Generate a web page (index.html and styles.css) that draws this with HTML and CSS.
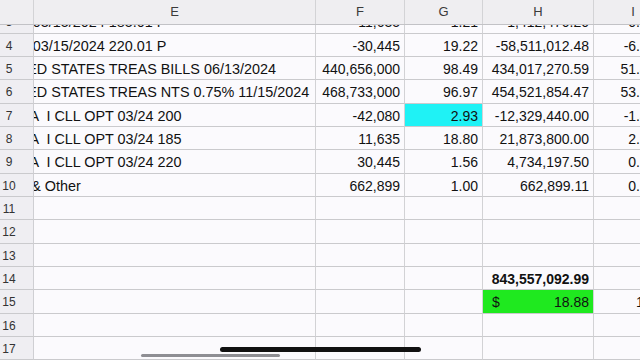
FILE: index.html
```html
<!DOCTYPE html>
<html>
<head>
<meta charset="utf-8">
<link rel="stylesheet" href="styles.css">
</head>
<body>
<div class="sheet">
  <div class="hdr">
    <div class="w-rn"></div>
    <div class="w-e">E</div>
    <div class="w-f">F</div>
    <div class="w-g">G</div>
    <div class="w-h">H</div>
    <div class="w-i">I</div>
  </div>
  <div class="viewport">
    <div class="rows">
      <div class="row"><div class="w-rn rn">3</div><div class="w-e e">TSLA 03/15/2024 185.01 P</div><div class="w-f num">-11,635</div><div class="w-g num">1.21</div><div class="w-h num">-1,412,470.20</div><div class="w-i num">-0.17%</div></div>
      <div class="row"><div class="w-rn rn">4</div><div class="w-e e">TSLA 03/15/2024 220.01 P</div><div class="w-f num">-30,445</div><div class="w-g num">19.22</div><div class="w-h num">-58,511,012.48</div><div class="w-i num">-6.94%</div></div>
      <div class="row"><div class="w-rn rn">5</div><div class="w-e e">UNITED STATES TREAS BILLS 06/13/2024</div><div class="w-f num">440,656,000</div><div class="w-g num">98.49</div><div class="w-h num">434,017,270.59</div><div class="w-i num">51.45%</div></div>
      <div class="row"><div class="w-rn rn">6</div><div class="w-e e">UNITED STATES TREAS NTS 0.75% 11/15/2024</div><div class="w-f num">468,733,000</div><div class="w-g num">96.97</div><div class="w-h num">454,521,854.47</div><div class="w-i num">53.88%</div></div>
      <div class="row"><div class="w-rn rn">7</div><div class="w-e e">TESLA  I CLL OPT 03/24 200</div><div class="w-f num">-42,080</div><div class="w-g num cyan">2.93</div><div class="w-h num">-12,329,440.00</div><div class="w-i num">-1.46%</div></div>
      <div class="row"><div class="w-rn rn">8</div><div class="w-e e">TESLA  I CLL OPT 03/24 185</div><div class="w-f num">11,635</div><div class="w-g num">18.80</div><div class="w-h num">21,873,800.00</div><div class="w-i num">2.59%</div></div>
      <div class="row"><div class="w-rn rn">9</div><div class="w-e e">TESLA  I CLL OPT 03/24 220</div><div class="w-f num">30,445</div><div class="w-g num">1.56</div><div class="w-h num">4,734,197.50</div><div class="w-i num">0.56%</div></div>
      <div class="row"><div class="w-rn rn">10</div><div class="w-e e">Cash &amp; Other</div><div class="w-f num">662,899</div><div class="w-g num">1.00</div><div class="w-h num">662,899.11</div><div class="w-i num">0.08%</div></div>
      <div class="row"><div class="w-rn rn">11</div><div class="w-e e"></div><div class="w-f num"></div><div class="w-g num"></div><div class="w-h num"></div><div class="w-i num"></div></div>
      <div class="row"><div class="w-rn rn">12</div><div class="w-e e"></div><div class="w-f num"></div><div class="w-g num"></div><div class="w-h num"></div><div class="w-i num"></div></div>
      <div class="row"><div class="w-rn rn">13</div><div class="w-e e"></div><div class="w-f num"></div><div class="w-g num"></div><div class="w-h num"></div><div class="w-i num"></div></div>
      <div class="row"><div class="w-rn rn">14</div><div class="w-e e"></div><div class="w-f num"></div><div class="w-g num"></div><div class="w-h num bold">843,557,092.99</div><div class="w-i num"></div></div>
      <div class="row"><div class="w-rn rn">15</div><div class="w-e e"></div><div class="w-f num"></div><div class="w-g num"></div><div class="w-h num green"><span>$</span><span>18.88</span></div><div class="w-i num">1.5%</div></div>
      <div class="row"><div class="w-rn rn">16</div><div class="w-e e"></div><div class="w-f num"></div><div class="w-g num"></div><div class="w-h num"></div><div class="w-i num"></div></div>
      <div class="row"><div class="w-rn rn">17</div><div class="w-e e"></div><div class="w-f num"></div><div class="w-g num"></div><div class="w-h num"></div><div class="w-i num"></div></div>
    </div>
  </div>
  <div class="hscroll"></div>
  <div class="homebar"></div>
</div>
</body>
</html>
```
FILE: styles.css
```css
html, body {
  margin: 0;
  padding: 0;
}
body {
  width: 640px;
  height: 360px;
  overflow: hidden;
  background: #fbfafd;
  font-family: "Liberation Sans", Arial, sans-serif;
}
.sheet {
  position: relative;
  width: 640px;
  height: 360px;
  overflow: hidden;
}
.w-rn { width: 34px; }
.w-e { width: 282px; }
.w-f { width: 89px; }
.w-g { width: 78px; }
.w-h { width: 111px; }
.w-i { width: 79px; }

.hdr {
  display: flex;
  width: 673px;
  height: 25px;
  box-sizing: border-box;
  background: #efeef1;
  border-bottom: 1px solid #c2c2c6;
}
.hdr > div {
  box-sizing: border-box;
  flex: none;
  border-right: 1px solid #d3d3d6;
  text-align: center;
  font-size: 13px;
  line-height: 24px;
  color: #3a3a3a;
}
.viewport {
  height: 335px;
  overflow: hidden;
}
.rows {
  margin-top: -14.6px;
}
.row {
  display: flex;
  width: 673px;
  height: 23.333px;
}
.row > div {
  flex: none;
  box-sizing: border-box;
  border-right: 1px solid #d2d2d5;
  border-bottom: 1px solid #cacacd;
  padding-top: 1px;
  font-size: 14px;
  line-height: 22px;
  white-space: pre;
  overflow: hidden;
  color: #111;
}
.row > .rn {
  background: #efeef2;
  font-size: 12px;
  color: #333;
  text-align: center;
  padding-right: 15px;
  border-right-color: #cfcfd3;
}
.row > .e {
  font-size: 14.4px;
  text-indent: -40.4px;
}
.row > .num {
  text-align: right;
  padding-right: 4px;
}
.row > .cyan {
  background: #1ff2f5;
}
.row > .bold {
  font-weight: bold;
}
.row > .green {
  background: #1fe91f;
  display: flex;
  justify-content: space-between;
  padding-left: 9px;
}
.hscroll {
  position: absolute;
  left: 141px;
  top: 354px;
  width: 139px;
  height: 3px;
  border-radius: 2px;
  background: #8e8e93;
}
.homebar {
  position: absolute;
  left: 220px;
  top: 347px;
  width: 201px;
  height: 5px;
  border-radius: 3px;
  background: #111;
}
```
